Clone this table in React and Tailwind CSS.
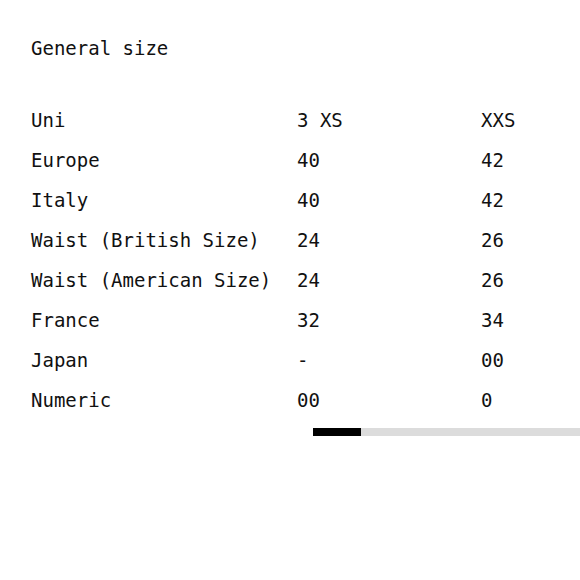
import React from 'react';

const sizes = ['3 XS', 'XXS'];

const rows = [
  { label: 'Uni', values: ['3 XS', 'XXS'] },
  { label: 'Europe', values: ['40', '42'] },
  { label: 'Italy', values: ['40', '42'] },
  { label: 'Waist (British Size)', values: ['24', '26'] },
  { label: 'Waist (American Size)', values: ['24', '26'] },
  { label: 'France', values: ['32', '34'] },
  { label: 'Japan', values: ['-', '00'] },
  { label: 'Numeric', values: ['00', '0'] },
];

const App = () => {
  return (
    <div
      className="w-[580px] h-[580px] bg-white text-[#111] overflow-hidden"
      style={{ fontFamily: '"DejaVu Sans Mono", "Liberation Mono", monospace' }}
    >
      {/* Title */}
      <h2 className="pl-[31px] pt-8 text-[19px] leading-[32px] font-normal">General size</h2>

      {/* Size table */}
      <div className="mt-9 pl-[31px]">
        <table className="border-collapse text-[19px] whitespace-nowrap">
          <tbody>
            {rows.map((row) => (
              <tr key={row.label} className="h-10">
                <td className="w-[266px] min-w-[266px] p-0 align-middle">{row.label}</td>
                {row.values.map((v, i) => (
                  <td key={sizes[i]} className="w-[184px] min-w-[184px] p-0 align-middle">{v}</td>
                ))}
              </tr>
            ))}
          </tbody>
        </table>
      </div>

      {/* Scroll indicator */}
      <div className="mt-2 ml-[313px] flex h-2 bg-[#dcdcdc]">
        <div className="w-12 h-full bg-black" />
      </div>
    </div>
  );
};

export default App;
